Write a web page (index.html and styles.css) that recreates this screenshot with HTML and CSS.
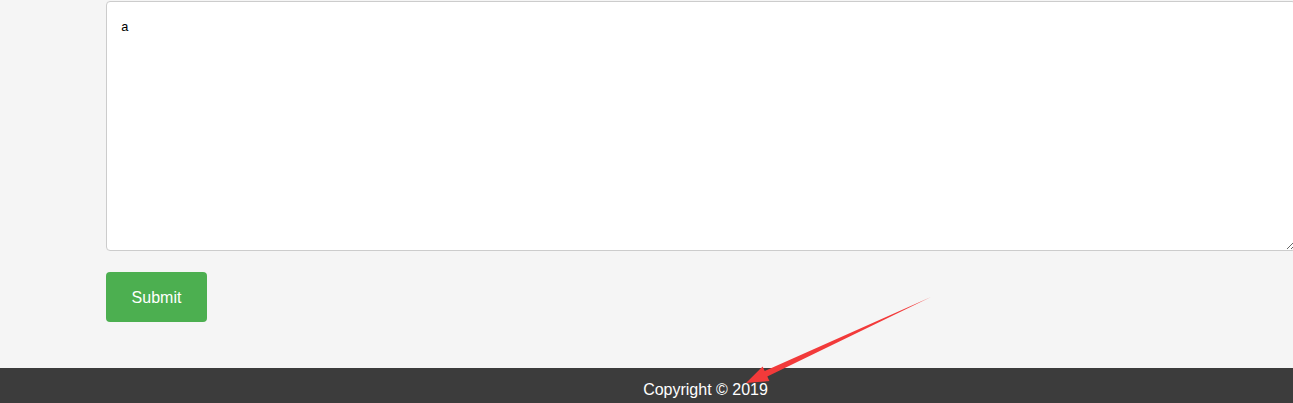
FILE: index.html
```html
<!DOCTYPE html>
<html>
<head>
<meta charset="utf-8">
<link rel="stylesheet" href="styles.css">
</head>
<body>
<main class="content">
  <form class="form">
    <textarea class="message">a</textarea>
    <button type="button" class="submit">Submit</button>
  </form>
</main>
<footer class="footer">
  <p class="copyright">Copyright © 2019</p>
</footer>
<svg class="annotation" width="1293" height="403" viewBox="0 0 1293 403">
  <polygon fill="#f23a3a" points="746,383 762.6,366.4 764.7,371 931,297 767.3,376.4 769.4,381"/>
</svg>
</body>
</html>
```
FILE: styles.css
```css
html, body {
  margin: 0;
  padding: 0;
  overflow: hidden;
  background: #f5f5f5;
  font-family: "Liberation Sans", Arial, sans-serif;
}
body {
  position: relative;
  width: 1293px;
  height: 403px;
}
.content {
  padding: 1px 0 46px 106px;
}
.form {
  display: flex;
  flex-direction: column;
  align-items: flex-start;
  gap: 21px;
}
.message {
  box-sizing: border-box;
  width: 1190px;
  height: 250px;
  margin: 0;
  padding: 18px 14px 16px;
  border: 1px solid #cccccc;
  border-radius: 4px;
  background: #fff;
  font-family: "Liberation Mono", "Courier New", monospace;
  font-size: 13px;
  color: #000;
  resize: vertical;
}
.submit {
  width: 101px;
  height: 50px;
  border: none;
  border-radius: 4px;
  background: #4caf50;
  color: #fff;
  font-family: "Liberation Sans", Arial, sans-serif;
  font-size: 16px;
  padding: 2px 0 0;
}
.footer {
  background: #3c3c3c;
  width: 1411px;
  height: 40px;
  padding-top: 13px;
  box-sizing: border-box;
}
.copyright {
  margin: 0;
  text-align: center;
  color: #fff;
  font-size: 16px;
}
.annotation {
  position: absolute;
  top: 0;
  left: 0;
  pointer-events: none;
}
```
